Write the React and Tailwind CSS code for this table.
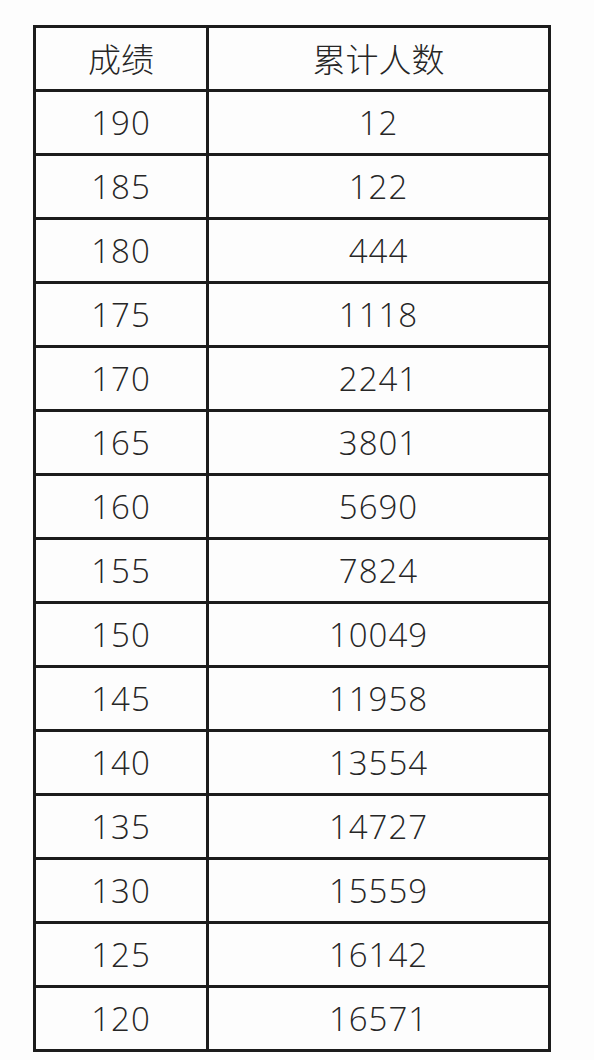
import React from "react";

const rows = [
  ["190", "12"],
  ["185", "122"],
  ["180", "444"],
  ["175", "1118"],
  ["170", "2241"],
  ["165", "3801"],
  ["160", "5690"],
  ["155", "7824"],
  ["150", "10049"],
  ["145", "11958"],
  ["140", "13554"],
  ["135", "14727"],
  ["130", "15559"],
  ["125", "16142"],
  ["120", "16571"],
];

export default function App() {
  const font = {
    fontFamily: '"Open Sans", "Noto Sans CJK SC", sans-serif',
  };
  const cjk = { fontFamily: '"Noto Sans CJK SC", sans-serif' };
  return (
    <div className="w-[594px] h-[1060px] bg-[#fdfdfd] pt-[25px] pl-[33px]" style={font}>
      <div className="w-[518px] border-[3px] border-[#1c1c1c] text-[#262626]">
        <div className="flex h-[61px]">
          <div className="w-[173px] border-r-[3px] border-[#1c1c1c] flex items-center justify-center text-[33px] font-light" style={cjk}>
            成绩
          </div>
          <div className="flex-1 flex items-center justify-center text-[33px] font-light" style={cjk}>
            累计人数
          </div>
        </div>
        {rows.map(([a, b]) => (
          <div key={a} className="flex h-[64px] border-t-[3px] border-[#1c1c1c]">
            <div className="w-[173px] border-r-[3px] border-[#1c1c1c] flex items-center justify-center text-[33px] font-light tracking-[1px]">
              {a}
            </div>
            <div className="flex-1 flex items-center justify-center text-[33px] font-light tracking-[1px]">
              {b}
            </div>
          </div>
        ))}
      </div>
    </div>
  );
}
